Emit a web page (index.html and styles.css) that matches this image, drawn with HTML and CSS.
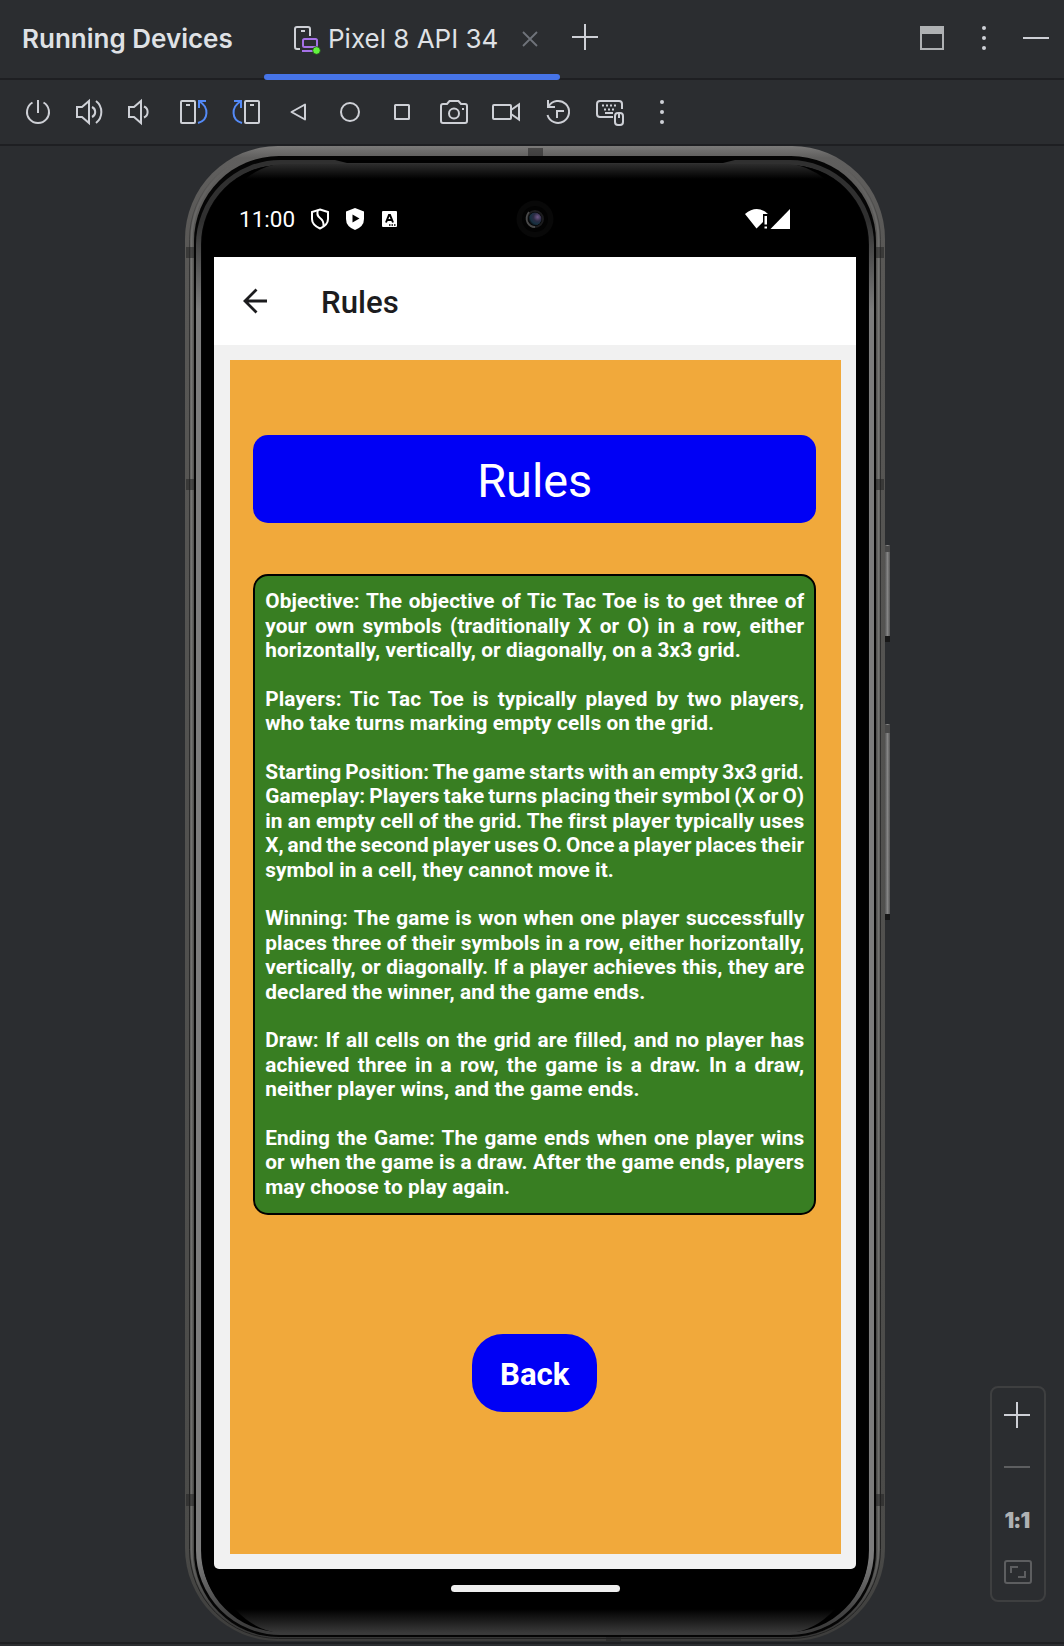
FILE: index.html
```html
<!DOCTYPE html>
<html lang="en">
<head>
<meta charset="utf-8">
<title>Running Devices</title>
<link rel="stylesheet" href="styles.css">
</head>
<body>
<div class="window">
  <header class="header">
    <h1 class="header-title">Running Devices</h1>
    <div class="tab">
      <svg class="tab-icon" width="30" height="30" viewBox="0 0 30 30" fill="none" stroke-width="2">
        <path d="M7 24H4a2 2 0 0 1-2-2V4a2 2 0 0 1 2-2h11a2 2 0 0 1 2 2v7" stroke="#ced0d6"/>
        <path d="M8 6h4" stroke="#ced0d6"/>
        <rect x="10" y="14" width="14" height="8" rx="1.5" stroke="#a571e6"/>
        <path d="M9 26h12" stroke="#a571e6"/>
        <circle cx="23.500" cy="25.500" r="3.800" fill="#62f33e" stroke="#24471f" stroke-width="0.800"/>
      </svg>
      <span class="tab-label">Pixel 8 API 34</span>
      <svg class="tab-close" width="16" height="16" viewBox="0 0 16 16"><path d="M1 1l14 14M15 1L1 15" stroke="#6f737a" stroke-width="1.800"/></svg>
    </div>
    <svg class="add" width="26" height="26" viewBox="0 0 26 26"><path d="M13 0v26M0 13h26" stroke="#ced0d6" stroke-width="2"/></svg>
    <div class="header-actions">
      <svg width="24" height="24" viewBox="0 0 24 24"><path d="M0 0h24v24H0z M2 8v14h20V8z" fill="#afb1b3" fill-rule="evenodd"/></svg>
      <svg width="4" height="24" viewBox="0 0 4 24" fill="#ced0d6"><circle cx="2" cy="2" r="2"/><circle cx="2" cy="12" r="2"/><circle cx="2" cy="22" r="2"/></svg>
      <svg class="minimize" width="26" height="24" viewBox="0 0 26 24"><path d="M0 12h26" stroke="#ced0d6" stroke-width="2"/></svg>
    </div>
  </header>

  <nav class="toolbar">
    <svg class="tool" viewBox="0 0 32 32"><path d="M16 4v13M10.500 6.500a11 11 0 1 0 11 0"/></svg>
    <svg class="tool" viewBox="0 0 32 32"><path d="M3 11h5l7-6v22l-7-6H3zM18 11a5.500 5.500 0 0 1 0 10M22 5a14 14 0 0 1 0 22"/></svg>
    <svg class="tool" viewBox="0 0 32 32"><path d="M3 11h5l7-6v22l-7-6H3zM18 10.500a6 6 0 0 1 0 11"/></svg>
    <svg class="tool" viewBox="0 0 32 32"><rect x="3" y="5" width="14" height="22" rx="1"/><path d="M8 9h4"/><path class="blue" d="M28 5h-7v7M21.500 5.500C31 11 31 24 20 27"/></svg>
    <svg class="tool" viewBox="0 0 32 32"><rect x="15" y="5" width="14" height="22" rx="1"/><path d="M20 9h4"/><path class="blue" d="M4 5h7v7M10.500 5.500C1 11 1 24 12 27"/></svg>
    <svg class="tool" viewBox="0 0 32 32"><path d="M23 8.500v15L9.500 16z" stroke-linejoin="round"/></svg>
    <svg class="tool" viewBox="0 0 32 32"><circle cx="16" cy="16" r="9"/></svg>
    <svg class="tool" viewBox="0 0 32 32"><rect x="9" y="9" width="14" height="14" rx="0.500"/></svg>
    <svg class="tool" viewBox="0 0 32 32"><path d="M5 8h4l2.500-3h9L23 8h4q2 0 2 2v15q0 2-2 2H5q-2 0-2-2V10q0-2 2-2z"/><circle cx="16" cy="17.500" r="5"/><path d="M24 13h2"/></svg>
    <svg class="tool" viewBox="0 0 32 32"><rect x="3" y="9" width="18" height="14" rx="1"/><path d="M21 14l8-5.500v15L21 18"/></svg>
    <svg class="tool" viewBox="0 0 32 32"><path d="M6 4v7h7M6.500 10.500A11 11 0 1 1 5.500 19M15 22v-7h7"/></svg>
    <svg class="tool" viewBox="0 0 32 32"><path d="M19 21H6q-3 0-3-3V8q0-3 3-3h19q3 0 3 3v5"/><path d="M8 9.500h16M10 13.500h12" stroke-dasharray="2 2"/><path d="M11 17h8"/><rect x="21" y="17" width="8" height="12" rx="3"/><path d="M25 17v5"/></svg>
    <svg class="tool tool-dots" viewBox="0 0 32 32"><circle cx="16" cy="6" r="2"/><circle cx="16" cy="16" r="2"/><circle cx="16" cy="26" r="2"/></svg>
  </nav>

  <main class="stage">
    <div class="phone">
      <svg class="frame" width="706" height="1496" viewBox="0 0 706 1496" fill="none">
        <defs>
          <linearGradient id="metal" x1="0" y1="0" x2="0" y2="1"><stop offset="0" stop-color="#7b7a79"/><stop offset="0.008" stop-color="#605f5e"/><stop offset="0.070" stop-color="#585755"/><stop offset="0.940" stop-color="#4a4a48"/><stop offset="1" stop-color="#3c3c3b"/></linearGradient>
          <linearGradient id="groove" x1="0" y1="0" x2="0" y2="1"><stop offset="0.010" stop-color="#333" stop-opacity="0"/><stop offset="0.080" stop-color="#333"/><stop offset="1" stop-color="#222"/></linearGradient>
          <linearGradient id="ridge" x1="0" y1="0" x2="0" y2="1"><stop offset="0.010" stop-color="#777" stop-opacity="0"/><stop offset="0.080" stop-color="#757573"/><stop offset="0.940" stop-color="#6c6c6a"/><stop offset="1" stop-color="#303030"/></linearGradient>
          <linearGradient id="shine" x1="0" y1="0" x2="0" y2="1"><stop offset="0" stop-color="#303030"/><stop offset="0.040" stop-color="#303030"/><stop offset="0.100" stop-color="#7c7c7c"/><stop offset="0.950" stop-color="#7c7c7c"/><stop offset="0.985" stop-color="#444"/><stop offset="1" stop-color="#3a3a3a"/></linearGradient>
          <linearGradient id="side"><stop offset="0" stop-color="#555"/><stop offset="0.500" stop-color="#858585"/><stop offset="1" stop-color="#555"/></linearGradient>
          <linearGradient id="fade-bottom" x1="0" y1="0" x2="0" y2="1"><stop offset="0" stop-color="#000"/><stop offset="1" stop-color="#3a3a3a"/></linearGradient>
          <linearGradient id="fade-top" x1="0" y1="0" x2="0" y2="1"><stop offset="0" stop-color="#2c2c2c"/><stop offset="1" stop-color="#000"/></linearGradient>
        </defs>
        <rect x="700" y="399" width="5" height="97" rx="1" fill="url(#side)"/>
        <rect x="700" y="578" width="5" height="196" rx="1" fill="url(#side)"/>
        <path d="M700 400h5v6h-5zM700 579h5v8h-5z" fill="#484848"/>
        <path d="M700 490h5v6h-5zM700 768h5v6h-5z" fill="#171717"/>
        <rect width="700" height="1495" rx="93" fill="url(#metal)"/>
        <rect x="4.500" y="4.500" width="691" height="1488" rx="89" stroke="url(#groove)" stroke-width="1"/>
        <rect x="6.500" y="6.500" width="687" height="1484" rx="87" stroke="url(#ridge)" stroke-width="2"/>
        <path d="M1 101h9v11H1zM690 101h9v11h-9zM1 333h9v11H1zM690 333h9v11h-9zM1 1348h9v12H1zM690 1348h9v12h-9zM343 2h15v9h-15zM421 1491h15v4h-15z" fill="#222" fill-opacity="0.550"/>
        <rect x="9" y="10" width="682" height="1481" rx="85" fill="#050505"/>
        <rect x="13.500" y="16.500" width="673" height="1470" rx="82" stroke="url(#shine)" stroke-width="5"/>
        <path d="M150 14h400l-12 3H162z" fill="#000"/>
        <rect x="17" y="19" width="666" height="1467" rx="79" fill="#000"/>
        <path d="M50 1463H650Q630 1485 604 1487H96Q70 1485 50 1463z" fill="url(#fade-bottom)"/>
        <path d="M60 33H640Q622 19 604 18H96Q78 19 60 33z" fill="url(#fade-top)"/>
      </svg>
      <div class="screen">
        <div class="statusbar">
          <span class="clock">11:00</span>
          <svg width="18" height="22" viewBox="0 0 18 22" fill="none" stroke="#fff" stroke-width="2"><path d="M9 1.500L17 4v7q0 6-8 9.500Q1 17 1 11V4z"/><path d="M7 2q-2 5 2 8t3.500 8"/></svg>
          <svg width="18" height="22" viewBox="0 0 18 22"><path d="M9 0l9 3.500V11q0 7.500-9 11Q0 18.500 0 11V3.500z" fill="#fff"/><path d="M6.500 6.500v8l7-4z" fill="#000"/></svg>
          <svg class="lang-icon" width="15" height="16" viewBox="0 0 15 16"><rect width="15" height="16" rx="1" fill="#fff"/><path d="M4 11.500L7 4h1l3 7.500M5 9h5" fill="none" stroke="#000" stroke-width="2"/><path d="M7 14h7" stroke="#000" stroke-width="1.500" stroke-dasharray="1.500 1"/></svg>
          <svg class="signals" width="46" height="20" viewBox="0 0 46 20"><path d="M0 5q12-10 23 0h-5v8l-6.500 6.500z" fill="#fff"/><path d="M19.500 7h2.500v8.500h-2.500zM19.500 17.500h2.500v2h-2.500z" fill="#fff"/><path d="M45 0v20H25.500z" fill="#fff"/></svg>
          <svg class="camera" width="38" height="38" viewBox="0 0 38 38">
            <radialGradient id="lens" cx="0.700" cy="0.350" r="0.700"><stop offset="0" stop-color="#705887"/><stop offset="0.450" stop-color="#2b2c44"/><stop offset="0.800" stop-color="#163040"/><stop offset="1" stop-color="#0a0f14"/></radialGradient>
            <circle cx="19" cy="19" r="18.500" fill="#080808"/><circle cx="19" cy="19" r="13" fill="#030303"/>
            <circle cx="19" cy="19" r="8" fill="none" stroke="#1c1c1e" stroke-width="2"/>
            <path d="M13 12Q9 17 11.500 22.500Q14 27 19 27" fill="none" stroke="#4a4a4a" stroke-width="1.800"/>
            <circle cx="19" cy="19" r="6.500" fill="url(#lens)"/>
          </svg>
        </div>
        <div class="appbar">
          <svg width="24" height="26" viewBox="0 0 24 26" fill="none" stroke="#1c1c1e" stroke-width="2.800"><path d="M24 13H2M13.500 1.500L2 13l11.500 11.500"/></svg>
          <h2 class="appbar-title">Rules</h2>
        </div>
        <div class="content">
          <div class="panel">
            <div class="banner">Rules</div>
            <div class="rules">
              <p><span>Objective: The objective of Tic Tac Toe is to get three of</span><span>your own symbols (traditionally X or O) in a row, either</span><span>horizontally, vertically, or diagonally, on a 3x3 grid.</span></p>
              <p><span>Players: Tic Tac Toe is typically played by two players,</span><span>who take turns marking empty cells on the grid.</span></p>
              <p><span>Starting Position: The game starts with an empty 3x3 grid.</span><span>Gameplay: Players take turns placing their symbol (X or O)</span><span>in an empty cell of the grid. The first player typically uses</span><span>X, and the second player uses O. Once a player places their</span><span>symbol in a cell, they cannot move it.</span></p>
              <p><span>Winning: The game is won when one player successfully</span><span>places three of their symbols in a row, either horizontally,</span><span>vertically, or diagonally. If a player achieves this, they are</span><span>declared the winner, and the game ends.</span></p>
              <p><span>Draw: If all cells on the grid are filled, and no player has</span><span>achieved three in a row, the game is a draw. In a draw,</span><span>neither player wins, and the game ends.</span></p>
              <p><span>Ending the Game: The game ends when one player wins</span><span>or when the game is a draw. After the game ends, players</span><span>may choose to play again.</span></p>
            </div>
            <button class="back">Back</button>
          </div>
        </div>
        <div class="navbar"><div class="home"></div></div>
      </div>
    </div>
    <div class="zoom">
      <svg viewBox="0 0 52 52"><path d="M25 13v26M12 26h26" stroke="#ced0d6"/></svg>
      <svg viewBox="0 0 52 52"><path d="M12 26h26" stroke="#5d5e60"/></svg>
      <div class="zoom-label">1:1</div>
      <svg viewBox="0 0 52 52" fill="none" stroke="#5d5e60"><rect x="13" y="16" width="26" height="22" rx="2"/><path d="M19 28v-6h7M26 32h7v-6"/></svg>
    </div>
  </main>
  <footer class="footer"></footer>
</div>
</body>
</html>
```
FILE: styles.css
```css
* { box-sizing: border-box; margin: 0; }
body { background: #2b2d30; font-family: Inter, sans-serif; }
svg { display: block; flex: none; }

.window { width: 1064px; height: 1646px; display: flex; flex-direction: column; overflow: hidden; }

.header { height: 80px; flex: none; display: flex; align-items: center; border-bottom: 2px solid #1e1f22; color: #dfe1e5; font-size: 26px; }
.header-title { width: 264px; padding: 0 0 2px 22px; font-size: 26px; font-weight: 600; white-space: nowrap; }
.tab { width: 296px; height: 80px; position: relative; top: 1px; display: flex; align-items: center; padding-left: 29px; padding-bottom: 3px; }
.tab::after { content: ""; position: absolute; left: 0; bottom: 0; width: 100%; height: 6px; border-radius: 3px; background: #4674e8; }
.tab-label { margin-left: 5px; width: 194px; white-space: nowrap; }
.tab-icon { margin-top: 3px; }
.add { margin: 0 0 4px 12px; }
.header-actions { margin-left: auto; padding: 0 15px 2px 0; display: flex; align-items: center; gap: 38px; }
.minimize { margin-left: -1px; }

.toolbar { height: 66px; flex: none; display: flex; align-items: center; gap: 20px; padding-left: 22px; border-bottom: 2px solid #1e1f22; }
.tool { width: 32px; height: 32px; fill: none; stroke: #ced0d6; stroke-width: 2; }
.tool .blue { stroke: #548af7; }
.tool-dots { fill: #ced0d6; stroke: none; }

.stage { height: 1496px; flex: none; position: relative; padding-left: 185px; }
.footer { height: 4px; border-top: 2px solid #1e1f22; }

.phone { position: relative; width: 700px; height: 1495px; padding: 38px 29px 0; font-family: Roboto, sans-serif; }
.frame { position: absolute; left: 0; top: 0; }
.screen { position: relative; }

.statusbar { position: relative; height: 73px; display: flex; align-items: center; padding: 0 65px 3px 25px; color: #fff; }
.clock { width: 72px; font-size: 22.500px; }
.statusbar svg + svg { margin-left: 16.500px; }
.statusbar .lang-icon { margin-left: 18px; }
.statusbar .signals { margin-left: auto; }
.statusbar .camera { position: absolute; left: 302px; top: 16px; margin: 0; }

.appbar { height: 88px; background: #fff; display: flex; align-items: center; padding-left: 29px; color: #1c1c1e; }
.appbar-title { margin-left: 54px; padding-top: 2px; font-size: 31.200px; font-weight: 500; }

.content { height: 1224px; padding: 15px 15.500px; background: #f1f1f1; border-radius: 0 0 5px 5px; }
.panel { height: 1194px; background: #f1a93b; display: flex; flex-direction: column; align-items: center; padding: 75px 0.500px 0 0; }
.banner { width: 563px; height: 88px; flex: none; border-radius: 15px; background: #0000f5; color: #fff; font-size: 46.800px; line-height: 93px; text-align: center; }
.rules { width: 563px; height: 641px; flex: none; margin-top: 51px; padding: 13.200px 10px 0; border: 2px solid #000; border-radius: 15px; background: #387e22; color: #fff; font-size: 20.800px; font-weight: 700; line-height: 24.400px; letter-spacing: 0.100px; }
.rules p { margin-bottom: 24.400px; }
.rules span { display: block; white-space: nowrap; text-align-last: justify; word-spacing: -2px; }
.rules span:last-child { text-align-last: left; word-spacing: 0; }
.back { width: 125px; height: 78px; margin-top: 119px; border: 0; border-radius: 31px; background: #0000f5; color: #fff; font: 700 31.200px Roboto, sans-serif; padding: 2px 0 0; }

.navbar { display: flex; justify-content: center; padding-top: 16px; }
.home { width: 169px; height: 7px; border-radius: 3.500px; background: #efefef; }

.zoom { position: absolute; left: 990px; top: 1240px; width: 56px; height: 216px; padding-top: 1px; border: 2px solid #3e3f40; border-radius: 8px; }
.zoom svg { width: 52px; height: 52px; stroke-width: 2; }
.zoom-label { height: 52px; line-height: 55px; text-align: center; font-size: 21.500px; font-weight: 900; letter-spacing: -0.800px; color: #afb1b3; padding-right: 2px; }
```
